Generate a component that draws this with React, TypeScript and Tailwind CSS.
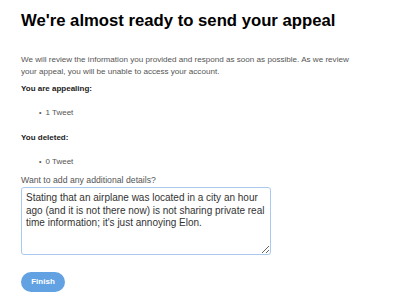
import { useState } from "react";

export default function App() {
  const [details, setDetails] = useState(
    "Stating that an airplane was located in a city an hour ago (and it is not there now) is not sharing private real time information; it's just annoying Elon."
  );

  return (
    <div className="h-[305px] w-[400px] bg-white font-['Liberation_Sans',Arial,sans-serif] text-[#333]">
      <div className="px-[21px] pt-[10px]">
        <h1 className="text-[16.7px] font-bold leading-[22px] text-black">
          We're almost ready to send your appeal
        </h1>

        <p className="mt-[22px] w-[345px] text-[8.1px] leading-[12px] text-[#555]">
          We will review the information you provided and respond as soon as possible. As we review
          your appeal, you will be unable to access your account.
        </p>

        <p className="mt-[5px] text-[8px] font-bold leading-[12px] text-[#222]">You are appealing:</p>
        <ul className="mt-[12px] pl-[18px] text-[8px] leading-[12px] text-[#555]">
          <li className="flex items-center gap-[4px]">
            <span className="text-[7px]">•</span>1 Tweet
          </li>
        </ul>

        <p className="mt-[13px] text-[8px] font-bold leading-[12px] text-[#222]">You deleted:</p>
        <ul className="mt-[12px] pl-[18px] text-[8px] leading-[12px] text-[#555]">
          <li className="flex items-center gap-[4px]">
            <span className="text-[7px]">•</span>0 Tweet
          </li>
        </ul>

        <label className="mt-[6px] block text-[8.7px] leading-[12px] text-[#555]">
          Want to add any additional details?
        </label>
        <textarea
          value={details}
          onChange={(e) => setDetails(e.target.value)}
          className="mt-[1px] block h-[68px] w-[250px] resize-y rounded-[3px] border border-[#a9c9ef] px-[4px] pt-[4px] text-[10px] leading-[12.5px] text-[#333] outline-none"
        />

        <button className="mt-[17px] h-[20px] w-[44px] rounded-full bg-[#62a2e3] text-[8px] font-bold text-white">
          Finish
        </button>
      </div>
    </div>
  );
}
